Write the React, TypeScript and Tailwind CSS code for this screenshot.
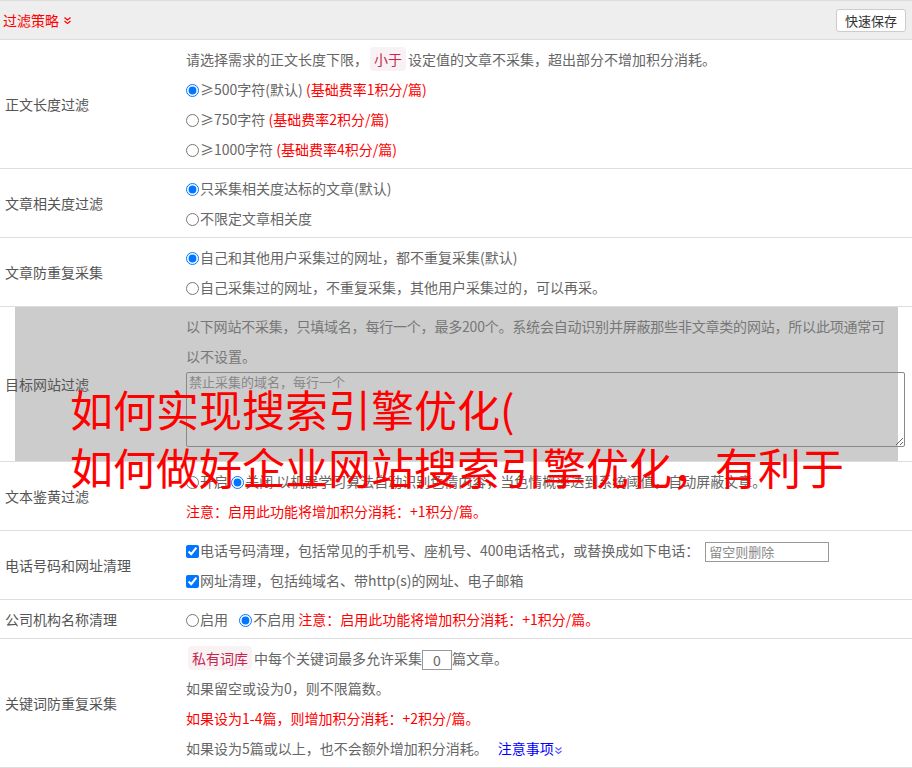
import React from 'react';

const font = { fontFamily: '"Noto Sans CJK SC", "Liberation Sans", sans-serif' };

const Radio = ({ checked, name }: { checked?: boolean; name: string }) => (
  <input type="radio" name={name} defaultChecked={checked} className="m-0 mr-[1px] w-[13px] h-[13px] accent-[#0075ff] align-[-2px]" />
);

const Check = () => (
  <input type="checkbox" defaultChecked className="m-0 mr-[1px] w-[13px] h-[13px] accent-[#0075ff] align-[-2px]" />
);

const Tag = ({ children }: { children: React.ReactNode }) => (
  <span className="bg-[#f9f2f4] text-[#c7254e] px-[4px] py-[2px] rounded-[4px] mx-[2px]">{children}</span>
);

const Row = ({ label, children }: { label: string; children: React.ReactNode }) => (
  <div className="flex border-b border-[#ddd]">
    <div className="w-[186px] shrink-0 pl-[5px] flex items-center text-[#555]">{label}</div>
    <div className="flex-1 py-[4px] pr-[6px]">{children}</div>
  </div>
);

const Line = ({ children, className = '' }: { children: React.ReactNode; className?: string }) => (
  <div className={`h-[30px] leading-[30px] whitespace-nowrap ${className}`}>{children}</div>
);

const Red = ({ children }: { children: React.ReactNode }) => <span className="text-[#f00]">{children}</span>;

export default function App() {
  return (
    <div className="relative w-[912px] h-[768px] overflow-hidden bg-white text-[14px] text-[#666]" style={font}>
      {/* header */}
      <div className="h-[40px] bg-[#eee] border-t border-b border-[#ddd] flex items-center justify-between pl-[3px] pr-[6px]">
        <div className="text-[#f00] flex items-center gap-[4px]">
          过滤策略
          <svg width="9" height="9" viewBox="0 0 9 9" fill="none" stroke="#f00" strokeWidth="1.2">
            <path d="M1.5 1.5 L4.5 4 L7.5 1.5" />
            <path d="M1.5 5 L4.5 7.5 L7.5 5" />
          </svg>
        </div>
        <button className="h-[23px] px-[8px] bg-white border border-[#ccc] rounded-[3px] text-[13px] text-[#333] leading-[21px]">快速保存</button>
      </div>

      <Row label="正文长度过滤">
        <Line>
          请选择需求的正文长度下限，<Tag>小于</Tag>设定值的文章不采集，超出部分不增加积分消耗。
        </Line>
        <Line><Radio name="len" checked />≥500字符(默认) <Red>(基础费率1积分/篇)</Red></Line>
        <Line><Radio name="len" />≥750字符 <Red>(基础费率2积分/篇)</Red></Line>
        <Line><Radio name="len" />≥1000字符 <Red>(基础费率4积分/篇)</Red></Line>
      </Row>

      <Row label="文章相关度过滤">
        <Line><Radio name="rel" checked />只采集相关度达标的文章(默认)</Line>
        <Line><Radio name="rel" />不限定文章相关度</Line>
      </Row>

      <Row label="文章防重复采集">
        <Line><Radio name="dup" checked />自己和其他用户采集过的网址，都不重复采集(默认)</Line>
        <Line><Radio name="dup" />自己采集过的网址，不重复采集，其他用户采集过的，可以再采。</Line>
      </Row>

      <div className="relative">
        <div className="absolute left-[15px] right-[14px] top-0 bottom-0 bg-[#ccc]" />
        <div className="relative">
          <Row label="目标网站过滤">
            <div className="text-[#777]">
              <Line className="tracking-[-0.2px]">以下网站不采集，只填域名，每行一个，最多200个。系统会自动识别并屏蔽那些非文章类的网站，所以此项通常可</Line>
              <Line>以不设置。</Line>
              <textarea
                placeholder="禁止采集的域名，每行一个"
                className="block w-[719px] h-[75px] mt-[1px] mb-[10px] bg-transparent border border-[#888] rounded-[2px] px-[2px] py-0 text-[13px] leading-[18px] placeholder:text-[#888] outline-none"
              />
            </div>
          </Row>
        </div>
      </div>

      <Row label="文本鉴黄过滤">
        <Line><Radio name="porn" />开启 <Radio name="porn" checked />关闭 以机器学习算法自动识别色情内容，当色情概率达到系统阈值，自动屏蔽文章。</Line>
        <Line><Red>注意：启用此功能将增加积分消耗：+1积分/篇。</Red></Line>
      </Row>

      <Row label="电话号码和网址清理">
        <Line>
          <Check />电话号码清理，包括常见的手机号、座机号、400电话格式，或替换成如下电话：
          <input placeholder="留空则删除" className="ml-[6px] w-[124px] h-[20px] border border-[#999] px-[3px] text-[13px] placeholder:text-[#888] align-middle outline-none" />
        </Line>
        <Line><Check />网址清理，包括纯域名、带http(s)的网址、电子邮箱</Line>
      </Row>

      <Row label="公司机构名称清理">
        <Line>
          <Radio name="org" />启用 <span className="ml-[8px]" /><Radio name="org" checked />不启用 <Red>注意：启用此功能将增加积分消耗：+1积分/篇。</Red>
        </Line>
      </Row>

      <Row label="关键词防重复采集">
        <Line>
          <Tag>私有词库</Tag>中每个关键词最多允许采集<input defaultValue="0" className="w-[30px] h-[20px] border border-[#999] text-center text-[14px] align-middle outline-none text-[#666]" />篇文章。
        </Line>
        <Line>如果留空或设为0，则不限篇数。</Line>
        <Line><Red>如果设为1-4篇，则增加积分消耗：+2积分/篇。</Red></Line>
        <Line>
          如果设为5篇或以上，也不会额外增加积分消耗。
          <span className="ml-[10px] text-[#00f]">注意事项</span>
          <svg width="9" height="9" viewBox="0 0 9 9" fill="none" stroke="#55f" strokeWidth="1.1" className="inline align-middle">
            <path d="M1.5 1.5 L4.5 4 L7.5 1.5" />
            <path d="M1.5 5 L4.5 7.5 L7.5 5" />
          </svg>
        </Line>
      </Row>

      {/* overlay title */}
      <div className="absolute left-[70px] top-[379px] text-[43px] leading-[58px] text-[#f00] whitespace-nowrap pointer-events-none">
        <div>如何实现搜索引擎优化(</div>
        <div>如何做好企业网站搜索引擎优化，有利于</div>
      </div>
    </div>
  );
}
